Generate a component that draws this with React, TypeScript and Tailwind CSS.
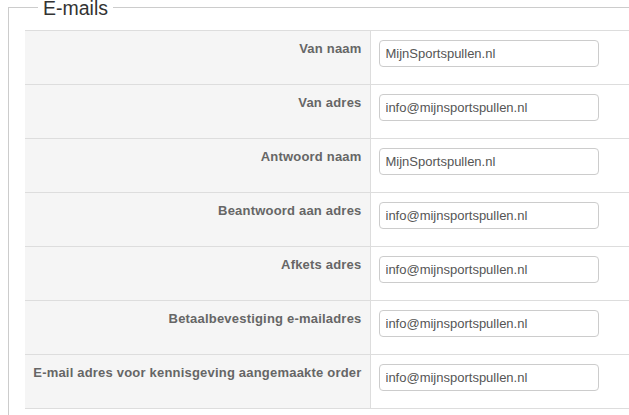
const rows = [
  { label: 'Van naam', value: 'MijnSportspullen.nl' },
  { label: 'Van adres', value: 'info@mijnsportspullen.nl' },
  { label: 'Antwoord naam', value: 'MijnSportspullen.nl' },
  { label: 'Beantwoord aan adres', value: 'info@mijnsportspullen.nl' },
  { label: 'Afkets adres', value: 'info@mijnsportspullen.nl' },
  { label: 'Betaalbevestiging e-mailadres', value: 'info@mijnsportspullen.nl' },
  { label: 'E-mail adres voor kennisgeving aangemaakte order', value: 'info@mijnsportspullen.nl' },
];

export default function App() {
  return (
    <div className="h-[415px] w-full overflow-hidden bg-white font-['Liberation_Sans',Arial,sans-serif]">
      <fieldset className="ml-[8px] mt-[-5px] w-[700px] border border-[#cccccc] pl-[16px] pr-0 pb-4">
        <legend className="ml-[13px] px-[5px] pt-[2px] text-[19.5px] leading-[22px] text-[#333333]">E-mails</legend>
        <table className="mt-[11px] w-[660px] border-collapse">
          <tbody>
            {rows.map((row) => (
              <tr key={row.label} className="h-[54px] border-t border-b border-[#dddddd]">
                <td className="w-[345px] whitespace-nowrap border-r border-[#dddddd] bg-[#f5f5f5] px-[8px] pb-[8px] pt-[8px] text-right align-top text-[13px] font-bold leading-[20px] tracking-[0.2px] text-[#666666]">
                  {row.label}
                </td>
                <td className="px-[8px] pt-[9px] align-top">
                  <input
                    type="text"
                    defaultValue={row.value}
                    className="block h-[27px] w-[220px] rounded-[4px] border border-[#cccccc] bg-white px-[6px] text-[13px] text-[#555555] outline-none"
                  />
                </td>
              </tr>
            ))}
          </tbody>
        </table>
      </fieldset>
    </div>
  );
}
